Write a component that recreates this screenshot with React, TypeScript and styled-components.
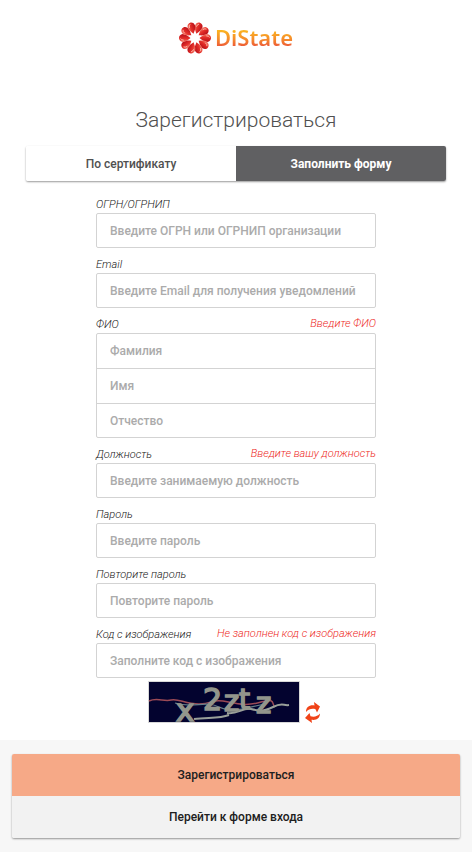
import React from "react";
import styled, { createGlobalStyle, css } from "styled-components";

const GlobalStyle = createGlobalStyle`
  *, *::before, *::after { box-sizing: border-box; }
  body {
    margin: 0;
    background: #ffffff;
    color: #505050;
    font-family: Roboto, "Liberation Sans", sans-serif;
    font-size: 12px;
  }
  button, input { font: inherit; margin: 0; }
`;

const Page = styled.div`
  display: flex;
  flex-direction: column;
  min-height: 100vh;
`;

const Header = styled.header`
  display: flex;
  justify-content: center;
  padding: 22px 0 50px;
`;

const LogoLink = styled.a`
  display: flex;
  align-items: center;
  gap: 4px;
  height: 32px;
  text-decoration: none;
`;

const LogoMark = styled.svg`
  width: 32px;
  height: 32px;
`;

const LogoName = styled.span`
  padding-bottom: 2px;
  font-family: "Noto Sans", sans-serif;
  font-size: 22px;
  font-weight: 600;
  line-height: 28px;
  color: transparent;
  background: linear-gradient(#fbb420 25%, #f58a2c 55%, #ea4a3a 85%);
  background-clip: text;
  -webkit-background-clip: text;
`;

const Main = styled.main`
  flex: 1;
  padding: 0 26px 17px;
`;

const Title = styled.h1`
  margin: 0 0 10px;
  font-size: 21px;
  font-weight: 300;
  line-height: 32px;
  text-align: center;
`;

const Tabs = styled.div`
  display: flex;
  height: 35px;
  border-radius: 2px;
  overflow: hidden;
  box-shadow: 0 1px 2px rgba(0, 0, 0, 0.4);
`;

const Tab = styled.button<{ $active?: boolean }>`
  flex: 1;
  padding: 0;
  border: 0;
  background: ${(p) => (p.$active ? "#606062" : "#ffffff")};
  color: ${(p) => (p.$active ? "#ffffff" : "#505050")};
  font-size: 12px;
  font-weight: ${(p) => (p.$active ? 700 : 500)};
  cursor: pointer;
`;

const Form = styled.form`
  width: 100%;
  max-width: 280px;
  margin: 0 auto;
  padding-top: 7px;
`;

const FieldHead = styled.div`
  display: flex;
  justify-content: space-between;
  align-items: flex-end;
  height: 25px;
  font-size: 11px;
  font-style: italic;
  font-weight: 300;
  line-height: 16px;
`;

const Label = styled.label`
  color: #202020;
`;

const ErrorText = styled.span`
  padding-bottom: 1px;
  color: #ee2a26;
`;

const Inputs = styled.div`
  border: 1px solid #d3d3d3;
  border-radius: 2px;
`;

const Input = styled.input`
  display: block;
  width: 100%;
  height: 34px;
  padding: 0 13px;
  border: 0;
  outline: 0;
  background: transparent;
  color: #404040;
  font-size: 12px;
  &:only-child {
    height: 33px;
  }
  & + & {
    height: 35px;
    border-top: 1px solid #d3d3d3;
  }
  & + &:last-child {
    height: 34px;
  }
  &::placeholder {
    color: #ababab;
    opacity: 1;
    font-weight: 500;
  }
`;

const CaptchaRow = styled.div`
  display: flex;
  justify-content: center;
  align-items: flex-end;
  gap: 4px;
  padding: 3px 2px 0 0;
`;

const CaptchaImage = styled.svg`
  width: 152px;
  height: 42px;
  border: 1px solid #d8d8d8;
  overflow: visible;
`;

const RefreshButton = styled.button`
  display: flex;
  width: 18px;
  height: 22px;
  padding: 0;
  border: 0;
  background: none;
  cursor: pointer;
`;

const Footer = styled.footer`
  padding: 14px 12px;
  background: #f7f7f7;
`;

const Actions = styled.div`
  display: flex;
  flex-direction: column;
  border-radius: 2px;
  box-shadow: 0 1px 2px rgba(0, 0, 0, 0.4);
  overflow: hidden;
`;

const actionPrimary = css`
  background: #f6a987;
`;

const Action = styled.button<{ $primary?: boolean }>`
  height: 42px;
  padding: 0;
  border: 0;
  background: #f2f2f2;
  color: #202020;
  font-size: 12px;
  font-weight: 500;
  cursor: pointer;
  ${(p) => p.$primary && actionPrimary}
`;

type FieldItem = { name: string; placeholder: string; type?: string };
type FieldSpec = { label: string; error?: string; items: FieldItem[] };

const fields: FieldSpec[] = [
  { label: "ОГРН/ОГРНИП", items: [{ name: "ogrn", placeholder: "Введите ОГРН или ОГРНИП организации" }] },
  { label: "Email", items: [{ name: "email", type: "email", placeholder: "Введите Email для получения уведомлений" }] },
  {
    label: "ФИО",
    error: "Введите ФИО",
    items: [
      { name: "surname", placeholder: "Фамилия" },
      { name: "firstname", placeholder: "Имя" },
      { name: "patronymic", placeholder: "Отчество" },
    ],
  },
  {
    label: "Должность",
    error: "Введите вашу должность",
    items: [{ name: "position", placeholder: "Введите занимаемую должность" }],
  },
  { label: "Пароль", items: [{ name: "password", type: "password", placeholder: "Введите пароль" }] },
  { label: "Повторите пароль", items: [{ name: "repeat", type: "password", placeholder: "Повторите пароль" }] },
  {
    label: "Код с изображения",
    error: "Не заполнен код с изображения",
    items: [{ name: "captcha", placeholder: "Заполните код с изображения" }],
  },
];

function Field({ label, error, items }: FieldSpec) {
  return (
    <div>
      <FieldHead>
        <Label htmlFor={items[0].name}>{label}</Label>
        {error && <ErrorText>{error}</ErrorText>}
      </FieldHead>
      <Inputs>
        {items.map((item) => (
          <Input
            key={item.name}
            id={item.name}
            name={item.name}
            type={item.type ?? "text"}
            placeholder={item.placeholder}
            aria-label={items.length > 1 ? item.placeholder : undefined}
          />
        ))}
      </Inputs>
    </div>
  );
}

const petals = Array.from({ length: 10 }, (_, i) => i * 36 + 18);

function Flower() {
  return (
    <LogoMark viewBox="0 0 32 32" aria-hidden="true">
      <defs>
        <linearGradient id="petal" x1="0" x2="1" y1="0" y2="0">
          <stop offset="0" stopColor="#f4826f" />
          <stop offset="0.4" stopColor="#e5302a" />
          <stop offset="1" stopColor="#b80f18" />
        </linearGradient>
      </defs>
      {petals.map((angle) => (
        <g key={angle} transform={`rotate(${angle} 16 16)`}>
          <path d="M16 11.500C14.600 9.500 11.900 6.800 12.100 3.800C12.400 1.200 14.200 0 16 0s3.600 1.200 3.900 3.800C20.100 6.800 17.400 9.500 16 11.500z" fill="url(#petal)" />
          <path d="M13.800 4.800q.2-2.600 1.800-3.300" stroke="#ffc1b2" strokeWidth="0.800" fill="none" />
        </g>
      ))}
    </LogoMark>
  );
}

function Captcha() {
  return (
    <CaptchaImage viewBox="0 0 150 40" role="img" aria-label="Код">
      <rect width="150" height="40" fill="#03032f" />
      <path d="M0 19C8 15 15 20 22 18S36 22 50 22 62 17 74 19 96 25 112 20 122 23 126 25" stroke="#9b4a56" strokeWidth="1.500" fill="none" />
      <path d="M26 21C45 27 56 18 70 25S98 25 116 22" stroke="#66808a" strokeWidth="1.200" fill="none" />
      <path d="M45 37C58 35 70 37 80 33M78 31C88 33 94 25 102 27S114 30 124 25 134 24 140 23" stroke="#9aa09a" strokeWidth="2" fill="none" />
      <g fill="#92958c" stroke="#92958c" strokeWidth="1.600" fontFamily="DejaVu Sans, sans-serif" fontWeight="400">
        <text x="27" y="39" fontSize="31">x</text>
        <text x="54" y="28" fontSize="30">2</text>
        <text x="75" y="29" fontSize="29">z</text>
        <text x="90" y="27" fontSize="28">t</text>
        <text x="107" y="31" fontSize="29">z</text>
      </g>
    </CaptchaImage>
  );
}

function RefreshIcon() {
  return (
    <svg width="18" height="22" viewBox="0 0 18 22" aria-hidden="true">
      <path d="M2 11C2 6 5.500 3.800 10.500 4.500L10 1L16 5.500L13 11.500L11.500 8.200C7.500 7.200 4.500 8.500 2 11z" fill="#f04318" />
      <path d="M16 12.500C15.800 17.500 12.500 19.500 7.500 18.800L8 22L1 17L5.500 12L6.500 15.300C10.500 16.300 13.500 15.300 16 12.500z" fill="#f04318" />
    </svg>
  );
}

export default function App() {
  return (
    <Page>
      <GlobalStyle />
      <Header>
        <LogoLink href="#">
          <Flower />
          <LogoName>DiState</LogoName>
        </LogoLink>
      </Header>
      <Main>
        <Title>Зарегистрироваться</Title>
        <Tabs>
          <Tab type="button">По сертификату</Tab>
          <Tab type="button" $active>Заполнить форму</Tab>
        </Tabs>
        <Form id="register" onSubmit={(e) => e.preventDefault()}>
          {fields.map((field) => (
            <Field key={field.label} {...field} />
          ))}
          <CaptchaRow>
            <Captcha />
            <RefreshButton type="button" aria-label="Обновить код">
              <RefreshIcon />
            </RefreshButton>
          </CaptchaRow>
        </Form>
      </Main>
      <Footer>
        <Actions>
          <Action type="submit" form="register" $primary>Зарегистрироваться</Action>
          <Action type="button">Перейти к форме входа</Action>
        </Actions>
      </Footer>
    </Page>
  );
}
